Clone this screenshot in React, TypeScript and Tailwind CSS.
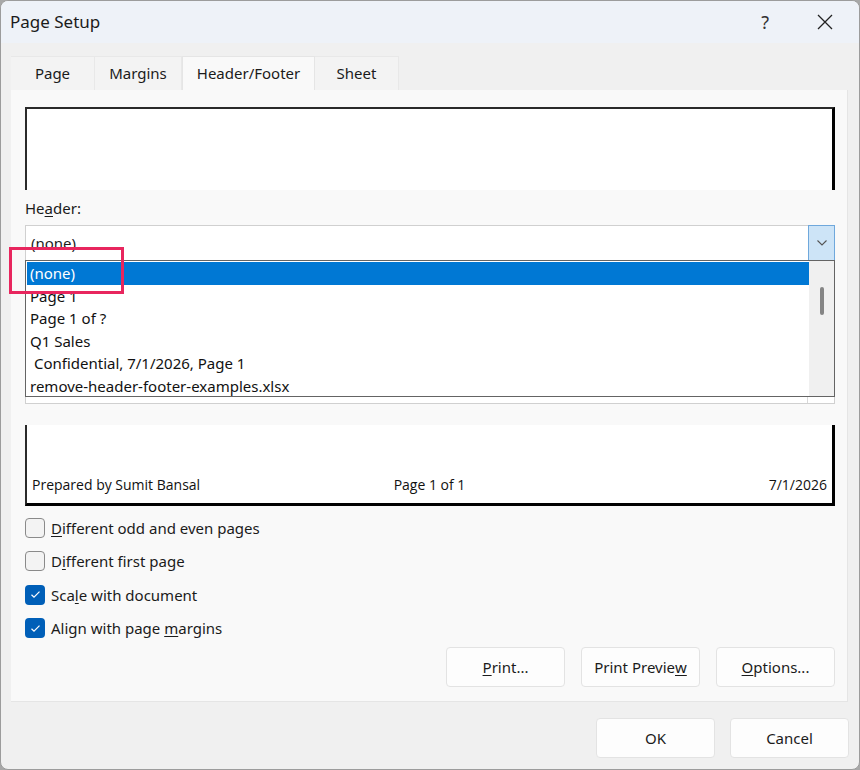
import React from 'react';

const ui = { fontFamily: '"Noto Sans", "Open Sans", Arial, sans-serif' };
const calibri = { fontFamily: '"Open Sans", "Noto Sans", Arial, sans-serif' };

const tabs = ['Page', 'Margins', 'Header/Footer', 'Sheet'];
const tabWidths = ['w-[84px]', 'w-[87px]', 'w-[133px]', 'w-[84px]'];

const headerOptions = [
  '(none)',
  'Page 1',
  'Page 1 of ?',
  'Q1 Sales',
  ' Confidential, 7/1/2026, Page 1',
  'remove-header-footer-examples.xlsx',
];

const checks = [
  { pre: '', key: 'D', post: 'ifferent odd and even pages', on: false },
  { pre: 'D', key: 'i', post: 'fferent first page', on: false },
  { pre: 'Sca', key: 'l', post: 'e with document', on: true },
  { pre: 'Align with page ', key: 'm', post: 'argins', on: true },
];

const Chevron = () => (
  <svg width="12" height="8" viewBox="0 0 12 8" fill="none">
    <path d="M1.5 1.5 L6 6 L10.5 1.5" stroke="#555" strokeWidth="1.1" />
  </svg>
);

const Box = ({ on }: { on: boolean }) =>
  on ? (
    <div className="w-[20px] h-[20px] rounded-[4px] bg-[#005fb8] flex items-center justify-center">
      <svg width="11" height="9" viewBox="0 0 11 9" fill="none">
        <path d="M1.5 4.8 L4 7.2 L9.5 1.6" stroke="#fff" strokeWidth="1.2" />
      </svg>
    </div>
  ) : (
    <div className="w-[20px] h-[20px] rounded-[4px] bg-[#f3f3f3] border border-[#8a8a8a]" />
  );

const Btn = ({ children, className = '' }: { children: React.ReactNode; className?: string }) => (
  <div
    className={`w-[119px] h-[40px] flex items-center justify-center rounded-[4px] bg-[#fdfdfd] border border-[#e3e3e3] text-[15px] text-[#1b1b1b] ${className}`}
  >
    {children}
  </div>
);

export default function App() {
  return (
    <div className="w-[860px] h-[770px] bg-[#a8a8a8] overflow-hidden" style={ui}>
      <div className="relative w-[860px] h-[770px] bg-[#f0f0f0] border border-[#9c9c9c] rounded-[8px] overflow-hidden flex flex-col">
        {/* title bar */}
        <div className="h-[42px] bg-[#eef2f8] flex items-center pl-[9px] shrink-0">
          <span className="text-[17px] text-[#1b1b1b]">Page Setup</span>
          <span className="ml-auto mr-[48px] text-[18px] text-[#333]">?</span>
          <svg width="16" height="16" viewBox="0 0 16 16" className="mr-[26px]">
            <path d="M1 1 L15 15 M15 1 L1 15" stroke="#222" strokeWidth="1.3" />
          </svg>
        </div>

        {/* tabs */}
        <div className="mt-[13px] ml-[10px] flex h-[34px] text-[15px] text-[#1b1b1b]">
          {tabs.map((t, i) => (
            <div
              key={t}
              className={`${tabWidths[i]} flex items-center justify-center ${
                i === 2
                  ? 'bg-[#f9f9f9] border-t border-x border-[#e5e5e5]'
                  : 'bg-[#f3f3f3] border-t border-r border-[#e8e8e8]'
              }`}
            >
              {t}
            </div>
          ))}
        </div>

        {/* panel */}
        <div className="mx-[10px] w-[837px] bg-[#f9f9f9] border-r border-b border-[#e5e5e5] pt-[17px] pl-[14px] pr-[12px] pb-[14px] flex flex-col">
          {/* header preview */}
          <div className="h-[83px] w-[810px] bg-white border-t-2 border-l-2 border-[#2a2a2a] border-r-[3px] border-r-black" />

          <div className="mt-[8px] h-[20px] leading-[20px] text-[15px] text-[#1b1b1b]">
            He<span className="underline underline-offset-2">a</span>der:
          </div>

          <div className="relative mt-[7px] z-10">
            <div className="h-[36px] w-[810px] bg-white border border-[#d0d0d0] flex items-center">
              <span className="pl-[5px] text-[15px] text-[#1b1b1b]">(none)</span>
              <div className="ml-auto w-[27px] h-[36px] -my-px -mr-px bg-[#cde4f7] border border-[#6fa8dc] flex items-center justify-center">
                <Chevron />
              </div>
            </div>

            {/* open list */}
            <div className="absolute left-0 top-[35px] w-[810px] h-[137px] bg-white border border-[#646464] flex">
              <div className="flex-1 pt-px pl-px">
                {headerOptions.map((o, i) => (
                  <div
                    key={o}
                    className={`h-[22.5px] leading-[22.5px] pl-[3px] text-[15px] whitespace-pre ${
                      i === 0 ? 'bg-[#0078d4] text-white' : 'text-[#111]'
                    }`}
                  >
                    {o}
                  </div>
                ))}
              </div>
              <div className="w-[25px] bg-[#f0f0f0] flex justify-center pt-[26px]">
                <div className="w-[4px] h-[28px] rounded-full bg-[#858585]" />
              </div>
            </div>
          </div>

          {/* footer combo (covered) */}
          <div className="mt-[107px] h-[36px] w-[810px] bg-white border border-[#d0d0d0] flex">
            <div className="ml-auto w-[27px] border-l border-[#d9d9d9]" />
          </div>

          {/* footer preview */}
          <div
            className="mt-[21px] h-[81px] w-[810px] bg-white border-l-2 border-[#2a2a2a] border-r-[3px] border-r-black border-b-[3px] border-b-black flex items-end pb-[8px] px-[5px] text-[14px] text-[#111]"
            style={calibri}
          >
            <span className="flex-1">Prepared by Sumit Bansal</span>
            <span className="flex-1 text-center">Page 1 of 1</span>
            <span className="flex-1 text-right">7/1/2026</span>
          </div>

          {/* checkboxes */}
          <div className="mt-[5px] flex flex-col">
            {checks.map((c, i) => (
              <div key={i} className="h-[33.5px] flex items-center gap-[6px] text-[15px] text-[#1b1b1b]">
                <Box on={c.on} />
                <span>
                  {c.pre}
                  <span className="underline underline-offset-2">{c.key}</span>
                  {c.post}
                </span>
              </div>
            ))}
          </div>

          <div className="mt-[2px] flex justify-end gap-[16px]">
            <Btn>
              <span className="underline underline-offset-2">P</span>rint...
            </Btn>
            <Btn>
              Print Previe<span className="underline underline-offset-2">w</span>
            </Btn>
            <Btn>
              <span className="underline underline-offset-2">O</span>ptions...
            </Btn>
          </div>
        </div>

        {/* bottom */}
        <div className="mt-[16px] flex justify-end gap-[15px] pr-[10px]">
          <Btn className="border-[#5e9bd6]">OK</Btn>
          <Btn>Cancel</Btn>
        </div>

        {/* highlight */}
        <div className="absolute left-[8px] top-[246px] w-[115px] h-[47px] border-[3px] border-[#e8265e] z-20" />
      </div>
    </div>
  );
}
